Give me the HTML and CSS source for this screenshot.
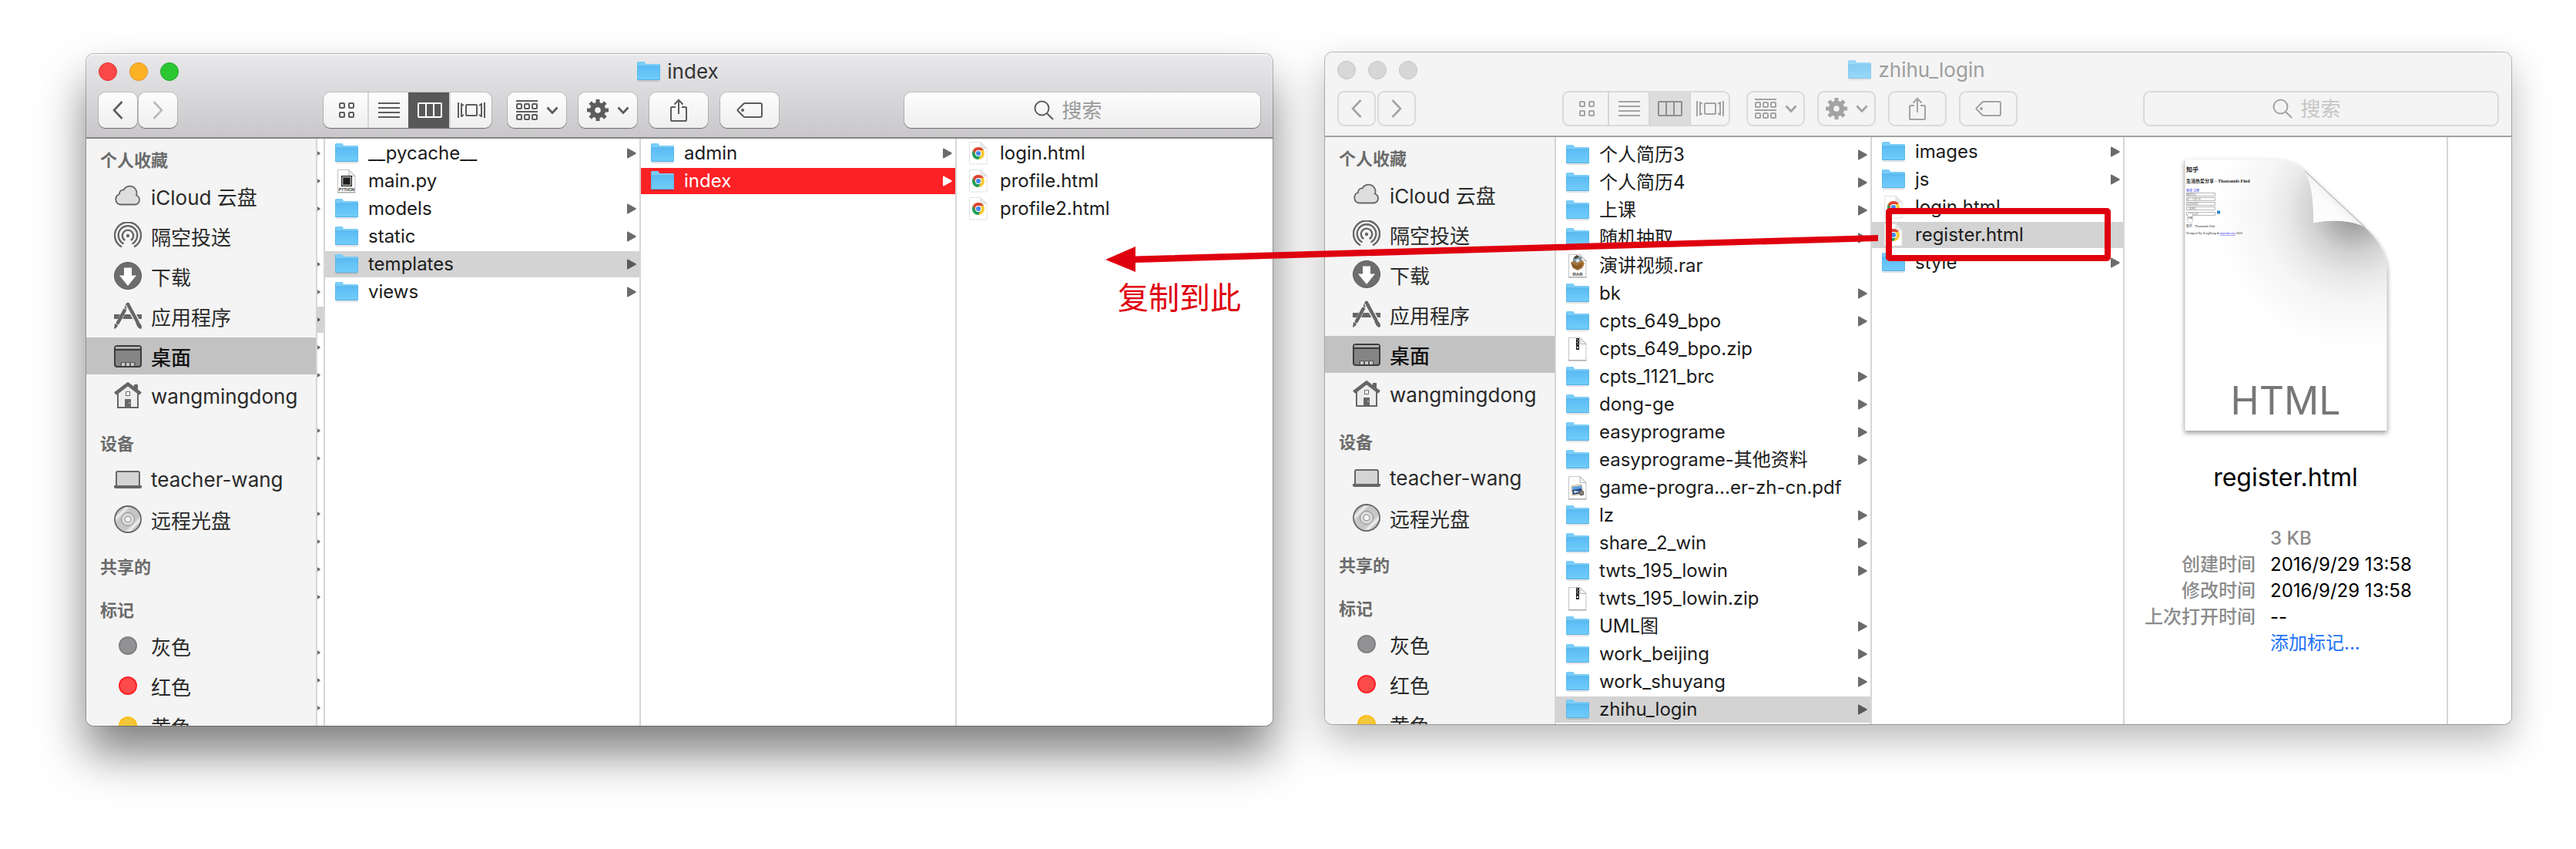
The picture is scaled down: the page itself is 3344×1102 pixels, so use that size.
FILE: index.html
```html
<!DOCTYPE html>
<html lang="zh-CN">
<head>
<meta charset="utf-8">
<title>index</title>
<link rel="stylesheet" href="styles.css">
</head>
<body>
<svg class="sprite" aria-hidden="true">
  <defs>
    <linearGradient id="folder-fill" x1="0" y1="0" x2="0" y2="1"><stop offset="0" stop-color="#5bbcf4"/><stop offset="1" stop-color="#73cdfb"/></linearGradient>
    <linearGradient id="disc-fill" x1="0" y1="0" x2="1" y2="1"><stop offset="0" stop-color="#c4c4c4"/><stop offset=".2" stop-color="#c0c0c0"/><stop offset=".25" stop-color="#f2f2f2"/><stop offset=".34" stop-color="#c6c6c6"/><stop offset=".66" stop-color="#c6c6c6"/><stop offset=".75" stop-color="#f2f2f2"/><stop offset=".8" stop-color="#c0c0c0"/></linearGradient>
    <linearGradient id="curl-fill" x1="0" y1="1" x2="1" y2="0"><stop offset="0" stop-color="#fff"/><stop offset=".4" stop-color="#fbfbfb"/><stop offset="1" stop-color="#c8c8c8"/></linearGradient>
    <radialGradient id="page-shade" gradientUnits="userSpaceOnUse" cx="225" cy="75" r="180"><stop offset="0" stop-color="#989898"/><stop offset=".1" stop-color="#a4a4a4"/><stop offset=".3" stop-color="#d2d2d2"/><stop offset=".48" stop-color="#e9e9e9"/><stop offset=".65" stop-color="#f5f5f5"/><stop offset="1" stop-color="#fff"/></radialGradient>
  </defs>
  <symbol id="folder" viewBox="0 0 30 28">
    <path d="M1 25.500h28v1.500H1z" fill="#000" opacity=".14"/>
    <path d="M0 7V2.500Q0 1 1.500 1h7q1.200 0 1.700 1l.8 2H28.500Q30 4 30 5.500V24q0 1-1 1H1q-1 0-1-1z" fill="#79cdf9"/>
    <path d="M0 7.500h30V24q0 1-1 1H1q-1 0-1-1z" fill="url(#folder-fill)"/>
    <path d="M0 7h30M.500 24.500h29" stroke="#45a3da" stroke-width="1" opacity=".75"/>
    <path d="M.500 2v22M29.500 5v19" stroke="#4fb0e6" stroke-width="1" opacity=".5"/>
  </symbol>
  <symbol id="doc" viewBox="0 0 30 32">
    <path d="M3.500 1.500h14.500l8 8v21h-22.500z" fill="#fff" stroke="#c3c3c3"/>
    <path d="M18 1.500v8h8z" fill="#f1f1f1" stroke="#b4b4b4"/>
    <path d="M3 31h23.500" stroke="#999" stroke-width="1"/>
  </symbol>
  <symbol id="zip" viewBox="0 0 30 32">
    <use href="#doc"/>
    <path d="M13 2h4v15h-4z" fill="#222"/>
    <path d="M14 3h1v1h-1zM15 5h1v1h-1zM14 7h1v1h-1zM15 9h1v1h-1zM14 13h2v2h-2z" fill="#fff"/>
  </symbol>
  <symbol id="pdf" viewBox="0 0 30 32">
    <use href="#doc"/>
    <path d="M7 14l13-2 2 12-14 2z" fill="#e8dcc8" stroke="#b59d74" stroke-width=".8"/>
    <path d="M8 15l12-1.500.5 4-12 2z" fill="#5aa0e0"/><path d="M8 19l12-2 1 6-12 2z" fill="#27488a"/><path d="M10 20l8 1-7 2z" fill="#eee"/>
    <circle cx="20" cy="23" r="3" fill="#8a8078" stroke="#555"/>
  </symbol>
  <symbol id="chrome" viewBox="0 0 30 32">
    <path d="M3.500 1.500h14.500l8 8v20.500h-22.500z" fill="#fff" stroke="#e2e2e2"/>
    <path d="M18 1.500v8h8z" fill="#e9e9e9" stroke="#ddd"/>
    <circle cx="15" cy="16" r="8" fill="#fbc934"/>
    <path d="M8.100 12A8 8 0 0 0 15 24l3.500-6a4 4 0 0 1-7 0z" fill="#1a9f5a"/>
    <path d="M8.100 12A8 8 0 0 1 21.900 12H15a4 4 0 0 0-3.500 6z" fill="#dc4437"/>
    <circle cx="15" cy="16" r="4" fill="#fff"/><circle cx="15" cy="16" r="3" fill="#4285f4"/>
  </symbol>
  <symbol id="arrow" viewBox="0 0 12 14"><path d="M0 1.500Q0 0 1.500.700L11 6q1.500 1 0 2L1.500 13.300Q0 14 0 12.500z" fill="currentColor"/></symbol>

  <symbol id="cloud" viewBox="0 0 36 36"><path d="M8 29.500a7 7 0 0 1-1-13.500a5 5 0 0 1 5.500-5.500a9 9 0 0 1 17 4.500q0 1.500-.5 2.500a6.300 6.300 0 0 1-1 12z" fill="#dedede" stroke="#666" stroke-width="1.800"/></symbol>
  <symbol id="airdrop" viewBox="0 0 36 36">
    <g fill="none" stroke="#666" stroke-width="2.400"><path d="M10 32.500a17 17 0 1 1 16 0" /><path d="M12.500 28.500a12.300 12.300 0 1 1 11 0"/><path d="M14.300 24a7.200 7.200 0 1 1 7.400 0"/></g><circle cx="18" cy="18" r="2.200" fill="#666"/>
  </symbol>
  <symbol id="download" viewBox="0 0 36 36"><circle cx="18" cy="18" r="17.500" fill="#6d6d6d" stroke="#5c5c5c"/><path d="M13 7.500h10v10h6L18 31 7 17.500h6z" fill="#fff"/></symbol>
  <symbol id="apps" viewBox="0 0 36 36">
    <path d="M0 16h8l-3 6H0zM14 16h8l3 6H11zM29 16h7v6h-4z" fill="#666"/>
    <path d="M18 3L5 27" stroke="#666" stroke-width="4.500" stroke-linecap="round" stroke-dasharray="4 5 30"/>
    <path d="M18 3l13 24" stroke="#f4f4f4" stroke-width="7"/>
    <path d="M18 3l12 22" stroke="#666" stroke-width="4.500" stroke-linecap="round"/>
    <path d="M28 27l4-2 4 6q0 3-1 4-4-1-5-4zM1 28l4 2q-1 4-5 5z" fill="#666"/>
  </symbol>
  <symbol id="desktop" viewBox="0 0 36 36"><rect x="1" y="5" width="34" height="27" rx="3" fill="#858585" stroke="#3c3c3c" stroke-width="2"/><path d="M2 6h32v2.500H2z" fill="#b5b5b5"/><path d="M1 10h34" stroke="#3c3c3c" stroke-width="1.800"/><path d="M8.500 26h19v5h-19z" fill="#5a5a5a"/><path d="M10 27h4v4h-4zM16 27h4v4h-4zM22 27h4v4h-4z" fill="#c8c8c8"/></symbol>
  <symbol id="home" viewBox="0 0 36 36"><path d="M5 14L18 4l13 10v19H5z" fill="#ececec" stroke="#666" stroke-width="2"/><path d="M26 3h5v9l-5-4z" fill="#666"/><path d="M1.500 15L18 2.500 34.500 15" fill="none" stroke="#666" stroke-width="4.500"/><path d="M14 22h8v11h-8z" fill="#666"/><path d="M15.500 12.500h5v5h-5z" fill="#fff" stroke="#666"/><path d="M20 26v2" stroke="#ddd"/></symbol>
  <symbol id="laptop" viewBox="0 0 36 36"><rect x="3" y="8" width="30" height="19" rx="2" fill="#d4d4d4" stroke="#666" stroke-width="2"/><path d="M0 26h36v2q0 2-2 2H2q-2 0-2-2z" fill="#666"/></symbol>
  <symbol id="disc" viewBox="0 0 36 36"><circle cx="18" cy="18" r="17" fill="url(#disc-fill)" stroke="#666" stroke-width="1.800"/><circle cx="18" cy="18" r="8.500" fill="#dcdcdc" stroke="#888"/><circle cx="18" cy="18" r="4" fill="#f4f4f4" stroke="#888"/></symbol>

  <symbol id="back" viewBox="0 0 14 26"><path d="M12.500 2L2 13l10.500 11" fill="none" stroke="currentColor" stroke-width="2.600"/></symbol>
  <symbol id="forward" viewBox="0 0 14 26"><path d="M1.500 2L12 13 1.500 24" fill="none" stroke="currentColor" stroke-width="2.600"/></symbol>
  <symbol id="grid" viewBox="0 0 20 20"><g fill="none" stroke="currentColor" stroke-width="2"><rect x="1" y="1" width="6" height="6" rx="1"/><rect x="13" y="1" width="6" height="6" rx="1"/><rect x="1" y="13" width="6" height="6" rx="1"/><rect x="13" y="13" width="6" height="6" rx="1"/></g></symbol>
  <symbol id="list" viewBox="0 0 28 20"><path d="M0 1h28M0 7h28M0 13h28M0 19h28" stroke="currentColor" stroke-width="2"/></symbol>
  <symbol id="columns" viewBox="0 0 32 20"><path d="M2 1h28q1 0 1 1v16q0 1-1 1H2q-1 0-1-1V2q0-1 1-1zM11 1v18M21 1v18" fill="none" stroke="currentColor" stroke-width="2"/></symbol>
  <symbol id="flow" viewBox="0 0 36 20"><g fill="none" stroke="currentColor" stroke-width="2"><path d="M1 0v20M35 0v20M5 1v18M31 1v18M5 2l3 2M5 18l3-2M31 2l-3 2M31 18l-3-2"/><rect x="11" y="3" width="14" height="14" rx="1"/></g></symbol>
  <symbol id="group" viewBox="0 0 28 26"><g fill="none" stroke="currentColor" stroke-width="2"><path d="M0 1h28M0 15h28"/><rect x="1" y="5" width="6" height="6" rx="1"/><rect x="11" y="5" width="6" height="6" rx="1"/><rect x="21" y="5" width="6" height="6" rx="1"/><rect x="1" y="19" width="6" height="6" rx="1"/><rect x="11" y="19" width="6" height="6" rx="1"/><rect x="21" y="19" width="6" height="6" rx="1"/></g></symbol>
  <symbol id="gear" viewBox="0 0 28 28"><g stroke="currentColor" stroke-width="5"><path d="M14 0v7M14 21v7M0 14h7M21 14h7M4.100 4.100l5 5M18.900 18.900l5 5M23.900 4.100l-5 5M9.100 18.900l-5 5"/></g><circle cx="14" cy="14" r="7" fill="none" stroke="currentColor" stroke-width="6.500"/></symbol>
  <symbol id="chevron" viewBox="0 0 16 10"><path d="M1.500 1.500L8 8.500l6.500-7" fill="none" stroke="currentColor" stroke-width="2.800"/></symbol>
  <symbol id="share" viewBox="0 0 24 30"><path d="M8 11H3q-1 0-1 1v16q0 1 1 1h18q1 0 1-1V12q0-1-1-1h-5M12 20V2M6.500 7.500L12 1.800l5.500 5.700" fill="none" stroke="currentColor" stroke-width="2"/></symbol>
  <symbol id="tag" viewBox="0 0 34 20"><path d="M11 1h20q2 0 2 2v14q0 2-2 2H11q-1 0-2-1l-7-7q-1-1 0-2l7-7q1-1 2-1z" fill="none" stroke="currentColor" stroke-width="2"/><circle cx="8" cy="10" r="2" fill="currentColor"/></symbol>
  <symbol id="search" viewBox="0 0 26 26"><circle cx="10.500" cy="10.500" r="9" fill="none" stroke="currentColor" stroke-width="2"/><path d="M17 17l8 8" stroke="currentColor" stroke-width="2.200"/></symbol>
</svg>

<main class="desktop">
  <section class="window window--active">
    <header class="titlebar">
      <div class="titlebar__top">
        <div class="lights"><button class="light light--close" aria-label="关闭"></button><button class="light light--min" aria-label="最小化"></button><button class="light light--zoom" aria-label="缩放"></button></div>
        <h1 class="title"><svg class="file-icon"><use href="#folder"/></svg>index</h1>
      </div>
      <div class="toolbar">
        <div class="nav"><button class="tool tool--nav" aria-label="后退"><svg width="14" height="26"><use href="#back"/></svg></button><button class="tool tool--nav" aria-label="前进" disabled><svg width="14" height="26"><use href="#forward"/></svg></button></div>
        <div class="views">
          <button class="view" aria-label="图标"><svg width="20" height="20"><use href="#grid"/></svg></button><button class="view" aria-label="列表"><svg width="28" height="20"><use href="#list"/></svg></button><button class="view view--on" aria-label="分栏"><svg width="32" height="20"><use href="#columns"/></svg></button><button class="view" aria-label="封面流"><svg width="36" height="20"><use href="#flow"/></svg></button>
        </div>
        <button class="tool" aria-label="排列"><svg width="28" height="26"><use href="#group"/></svg><svg width="16" height="10"><use href="#chevron"/></svg></button>
        <button class="tool" aria-label="操作"><svg width="28" height="28"><use href="#gear"/></svg><svg width="16" height="10"><use href="#chevron"/></svg></button>
        <button class="tool" aria-label="共享"><svg width="24" height="30"><use href="#share"/></svg></button>
        <button class="tool" aria-label="标记"><svg width="34" height="20"><use href="#tag"/></svg></button>
        <label class="search"><svg width="26" height="26"><use href="#search"/></svg><input type="search" placeholder="搜索" aria-label="搜索"></label>
      </div>
    </header>
    <div class="body">
      <nav class="sidebar">
        <h2>个人收藏</h2>
        <a href="#"><svg><use href="#cloud"/></svg>iCloud 云盘</a>
        <a href="#"><svg><use href="#airdrop"/></svg>隔空投送</a>
        <a href="#"><svg><use href="#download"/></svg>下载</a>
        <a href="#"><svg><use href="#apps"/></svg>应用程序</a>
        <a href="#" class="current"><svg><use href="#desktop"/></svg>桌面</a>
        <a href="#"><svg><use href="#home"/></svg>wangmingdong</a>
        <h2>设备</h2>
        <a href="#"><svg><use href="#laptop"/></svg>teacher-wang</a>
        <a href="#"><svg><use href="#disc"/></svg>远程光盘</a>
        <h2>共享的</h2>
        <h2>标记</h2>
        <a href="#"><span class="dot dot--gray"></span>灰色</a>
        <a href="#"><span class="dot dot--red"></span>红色</a>
        <a href="#"><span class="dot dot--yellow"></span>黄色</a>
      </nav>
      <ul class="column column--sliver" aria-hidden="true">
        <li><svg class="arrow"><use href="#arrow"/></svg></li><li><svg class="arrow"><use href="#arrow"/></svg></li><li><svg class="arrow"><use href="#arrow"/></svg></li><li></li><li><svg class="arrow"><use href="#arrow"/></svg></li><li><svg class="arrow"><use href="#arrow"/></svg></li><li class="selected"><svg class="arrow"><use href="#arrow"/></svg></li><li><svg class="arrow"><use href="#arrow"/></svg></li><li><svg class="arrow"><use href="#arrow"/></svg></li><li></li><li><svg class="arrow"><use href="#arrow"/></svg></li><li><svg class="arrow"><use href="#arrow"/></svg></li><li></li><li><svg class="arrow"><use href="#arrow"/></svg></li><li><svg class="arrow"><use href="#arrow"/></svg></li><li><svg class="arrow"><use href="#arrow"/></svg></li><li><svg class="arrow"><use href="#arrow"/></svg></li><li></li><li><svg class="arrow"><use href="#arrow"/></svg></li><li><svg class="arrow"><use href="#arrow"/></svg></li><li><svg class="arrow"><use href="#arrow"/></svg></li>
      </ul>
      <ul class="column">
        <li><svg class="file-icon"><use href="#folder"/></svg><span>__pycache__</span><svg class="arrow"><use href="#arrow"/></svg></li>
        <li><svg class="file-icon file-icon--doc" viewBox="0 0 30 32">
          <use href="#doc"/>
          <path d="M8 9h14v14H8z" fill="#1d1d1d"/><path d="M9.500 10.500h11v11h-11z" fill="#555" stroke="#bbb" stroke-width="1"/><path d="M11 12h8v8h-8z" fill="#1f1f1f"/>
          <text x="15" y="29" text-anchor="middle" class="badge-text badge-text--tiny">PYTHON</text>
        </svg><span>main.py</span></li>
        <li><svg class="file-icon"><use href="#folder"/></svg><span>models</span><svg class="arrow"><use href="#arrow"/></svg></li>
        <li><svg class="file-icon"><use href="#folder"/></svg><span>static</span><svg class="arrow"><use href="#arrow"/></svg></li>
        <li class="selected"><svg class="file-icon"><use href="#folder"/></svg><span>templates</span><svg class="arrow"><use href="#arrow"/></svg></li>
        <li><svg class="file-icon"><use href="#folder"/></svg><span>views</span><svg class="arrow"><use href="#arrow"/></svg></li>
      </ul>
      <ul class="column">
        <li><svg class="file-icon"><use href="#folder"/></svg><span>admin</span><svg class="arrow"><use href="#arrow"/></svg></li>
        <li class="selected selected--focus"><svg class="file-icon"><use href="#folder"/></svg><span>index</span><svg class="arrow"><use href="#arrow"/></svg></li>
      </ul>
      <ul class="column column--last">
        <li><svg class="file-icon file-icon--doc"><use href="#chrome"/></svg><span>login.html</span></li>
        <li><svg class="file-icon file-icon--doc"><use href="#chrome"/></svg><span>profile.html</span></li>
        <li><svg class="file-icon file-icon--doc"><use href="#chrome"/></svg><span>profile2.html</span></li>
      </ul>
    </div>
  </section>

  <section class="window window--inactive">
    <header class="titlebar">
      <div class="titlebar__top">
        <div class="lights"><button class="light" aria-label="关闭"></button><button class="light" aria-label="最小化"></button><button class="light" aria-label="缩放"></button></div>
        <h1 class="title"><svg class="file-icon"><use href="#folder"/></svg>zhihu_login</h1>
      </div>
      <div class="toolbar">
        <div class="nav"><button class="tool tool--nav" aria-label="后退"><svg width="14" height="26"><use href="#back"/></svg></button><button class="tool tool--nav" aria-label="前进"><svg width="14" height="26"><use href="#forward"/></svg></button></div>
        <div class="views">
          <button class="view" aria-label="图标"><svg width="20" height="20"><use href="#grid"/></svg></button><button class="view" aria-label="列表"><svg width="28" height="20"><use href="#list"/></svg></button><button class="view view--on" aria-label="分栏"><svg width="32" height="20"><use href="#columns"/></svg></button><button class="view" aria-label="封面流"><svg width="36" height="20"><use href="#flow"/></svg></button>
        </div>
        <button class="tool" aria-label="排列"><svg width="28" height="26"><use href="#group"/></svg><svg width="16" height="10"><use href="#chevron"/></svg></button>
        <button class="tool" aria-label="操作"><svg width="28" height="28"><use href="#gear"/></svg><svg width="16" height="10"><use href="#chevron"/></svg></button>
        <button class="tool" aria-label="共享"><svg width="24" height="30"><use href="#share"/></svg></button>
        <button class="tool" aria-label="标记"><svg width="34" height="20"><use href="#tag"/></svg></button>
        <label class="search"><svg width="26" height="26"><use href="#search"/></svg><input type="search" placeholder="搜索" aria-label="搜索"></label>
      </div>
    </header>
    <div class="body">
      <nav class="sidebar">
        <h2>个人收藏</h2>
        <a href="#"><svg><use href="#cloud"/></svg>iCloud 云盘</a>
        <a href="#"><svg><use href="#airdrop"/></svg>隔空投送</a>
        <a href="#"><svg><use href="#download"/></svg>下载</a>
        <a href="#"><svg><use href="#apps"/></svg>应用程序</a>
        <a href="#" class="current"><svg><use href="#desktop"/></svg>桌面</a>
        <a href="#"><svg><use href="#home"/></svg>wangmingdong</a>
        <h2>设备</h2>
        <a href="#"><svg><use href="#laptop"/></svg>teacher-wang</a>
        <a href="#"><svg><use href="#disc"/></svg>远程光盘</a>
        <h2>共享的</h2>
        <h2>标记</h2>
        <a href="#"><span class="dot dot--gray"></span>灰色</a>
        <a href="#"><span class="dot dot--red"></span>红色</a>
        <a href="#"><span class="dot dot--yellow"></span>黄色</a>
      </nav>
      <ul class="column column--scrolled">
        <li><svg class="file-icon"><use href="#folder"/></svg><span>个人简历3</span><svg class="arrow"><use href="#arrow"/></svg></li>
        <li><svg class="file-icon"><use href="#folder"/></svg><span>个人简历4</span><svg class="arrow"><use href="#arrow"/></svg></li>
        <li><svg class="file-icon"><use href="#folder"/></svg><span>上课</span><svg class="arrow"><use href="#arrow"/></svg></li>
        <li><svg class="file-icon"><use href="#folder"/></svg><span>随机抽取</span><svg class="arrow"><use href="#arrow"/></svg></li>
        <li><svg class="file-icon file-icon--doc" viewBox="0 0 30 32">
          <use href="#doc"/>
          <path d="M6 12l4-3 5 2 5-3 4 5-3 6-6 3-6-3z" fill="#a8733a"/>
          <path d="M9 6l5-3 7 2-2 5-5 2-5-2z" fill="#7d8f96"/><path d="M10 5l4-3 3 2-5 3z" fill="#4c4034"/>
          <path d="M12 8l4-1 2 3-4 2z" fill="#cfe6f2"/><path d="M7 13l7 3 7-4-1 5-6 4-6-4z" fill="#8a5a28"/>
          <text x="15" y="29" text-anchor="middle" class="badge-text">RAR</text>
        </svg><span>演讲视频.rar</span></li>
        <li><svg class="file-icon"><use href="#folder"/></svg><span>bk</span><svg class="arrow"><use href="#arrow"/></svg></li>
        <li><svg class="file-icon"><use href="#folder"/></svg><span>cpts_649_bpo</span><svg class="arrow"><use href="#arrow"/></svg></li>
        <li><svg class="file-icon file-icon--doc"><use href="#zip"/></svg><span>cpts_649_bpo.zip</span></li>
        <li><svg class="file-icon"><use href="#folder"/></svg><span>cpts_1121_brc</span><svg class="arrow"><use href="#arrow"/></svg></li>
        <li><svg class="file-icon"><use href="#folder"/></svg><span>dong-ge</span><svg class="arrow"><use href="#arrow"/></svg></li>
        <li><svg class="file-icon"><use href="#folder"/></svg><span>easyprograme</span><svg class="arrow"><use href="#arrow"/></svg></li>
        <li><svg class="file-icon"><use href="#folder"/></svg><span>easyprograme-其他资料</span><svg class="arrow"><use href="#arrow"/></svg></li>
        <li><svg class="file-icon file-icon--doc"><use href="#pdf"/></svg><span>game-progra...er-zh-cn.pdf</span></li>
        <li><svg class="file-icon"><use href="#folder"/></svg><span>lz</span><svg class="arrow"><use href="#arrow"/></svg></li>
        <li><svg class="file-icon"><use href="#folder"/></svg><span>share_2_win</span><svg class="arrow"><use href="#arrow"/></svg></li>
        <li><svg class="file-icon"><use href="#folder"/></svg><span>twts_195_lowin</span><svg class="arrow"><use href="#arrow"/></svg></li>
        <li><svg class="file-icon file-icon--doc"><use href="#zip"/></svg><span>twts_195_lowin.zip</span></li>
        <li><svg class="file-icon"><use href="#folder"/></svg><span>UML图</span><svg class="arrow"><use href="#arrow"/></svg></li>
        <li><svg class="file-icon"><use href="#folder"/></svg><span>work_beijing</span><svg class="arrow"><use href="#arrow"/></svg></li>
        <li><svg class="file-icon"><use href="#folder"/></svg><span>work_shuyang</span><svg class="arrow"><use href="#arrow"/></svg></li>
        <li class="selected"><svg class="file-icon"><use href="#folder"/></svg><span>zhihu_login</span><svg class="arrow"><use href="#arrow"/></svg></li>
      </ul>
      <ul class="column column--narrow">
        <li><svg class="file-icon"><use href="#folder"/></svg><span>images</span><svg class="arrow"><use href="#arrow"/></svg></li>
        <li><svg class="file-icon"><use href="#folder"/></svg><span>js</span><svg class="arrow"><use href="#arrow"/></svg></li>
        <li><svg class="file-icon file-icon--doc"><use href="#chrome"/></svg><span>login.html</span></li>
        <li class="selected"><svg class="file-icon file-icon--doc"><use href="#chrome"/></svg><span>register.html</span></li>
        <li><svg class="file-icon"><use href="#folder"/></svg><span>style</span><svg class="arrow"><use href="#arrow"/></svg></li>
      </ul>
      <article class="preview">
        <svg class="page" width="274" height="370" viewBox="0 0 274 370" role="img" aria-label="register.html">
          <path class="page__sheet" d="M6 7H123Q148 7 162 22L240 95Q269 122 269 153V359H6z"/>
          <path d="M6 7H123Q148 7 162 22Q174 42 173 89Q216 82 240 95Q269 122 269 153V359H6z" fill="url(#page-shade)"/>
          <path d="M162 22Q174 42 173 89Q216 82 240 95z" fill="url(#curl-fill)"/>
          <path d="M162 22L240 95" stroke="#c4c4c4" stroke-width="1.500"/>
          <path d="M6 8V359M269 153V359" stroke="#cfcfcf" stroke-width="1"/>
          <g class="mini">
            <text x="8" y="23" class="mini__h1">知乎</text>
            <text x="8" y="37" class="mini__h2">生活热爱分享 - Thousands Find</text>
            <text x="8" y="49" class="mini__link">登录 注册</text>
            <g fill="#fff" stroke="#999" stroke-width=".7"><path d="M8.500 50.500h37v4h-37zM8.500 56.500h37v4h-37zM8.500 62.500h37v4h-37zM8.500 68.500h37v4h-37zM8.500 75.500h37v4h-37z"/></g>
            <g class="mini__hint"><text x="9" y="54">邮箱地址</text><text x="9" y="60">起一个用户名</text><text x="9" y="66">创建新密码</text><text x="9" y="72">重复密码</text><text x="15" y="79">验证码</text></g>
            <path d="M48 73.500h4v4h-4z" fill="#2a86c8"/>
            <rect x="9.500" y="76.500" width="7" height="13" rx="3.500" fill="#fff" stroke="#aaa" stroke-width=".6"/><text x="10" y="84" class="mini__btn">注册</text>
            <text x="8" y="95">知乎 - Thousands Find</text>
            <text x="8" y="104">Designed By ZengRong &amp; <tspan class="mini__link">mycodes.net</tspan> 2016</text>
          </g>
          <text x="137" y="338" text-anchor="middle" class="page__type">HTML</text>
        </svg>
        <h2>register.html</h2>
        <dl>
          <dt></dt><dd class="muted">3 KB</dd>
          <dt>创建时间</dt><dd>2016/9/29 13:58</dd>
          <dt>修改时间</dt><dd>2016/9/29 13:58</dd>
          <dt>上次打开时间</dt><dd>--</dd>
          <dt></dt><dd><a href="#">添加标记...</a></dd>
        </dl>
      </article>
      <div class="column column--last"></div>
    </div>
  </section>

  <svg class="marks" aria-hidden="true"><g fill="#df000f"><path d="M1435 337l39-17v12.500L2438 305v8L1474 341v12z"/></g><rect x="2452" y="274" width="284" height="61" rx="1" fill="none" stroke="#df000f" stroke-width="8" stroke-linejoin="round"/></svg>
  <p class="note">复制到此</p>
</main>
</body>
</html>
```

FILE: styles.css
```css
* { box-sizing: border-box; }

body {
  margin: 0;
  background: #fff;
  color: #1c1c1c;
  font-family: Inter, "Noto Sans CJK SC", sans-serif;
  font-size: 24px;
}

h1, h2, p, ul, dl, dd { margin: 0; padding: 0; font-weight: 400; }
ul { list-style: none; }
button, input { font: inherit; color: inherit; padding: 0; border: 0; background: none; }
svg { display: block; flex: none; }
.sprite { position: absolute; width: 0; height: 0; }
.badge-text { font: 700 6px "Liberation Sans", sans-serif; fill: #333; }
.badge-text--tiny { font-size: 5px; }

.desktop {
  position: relative;
  display: flex;
  gap: 68px;
  height: 100vh;
  padding: 68px 84px 160px 112px;
  overflow: hidden;
}

/* windows */
.window {
  flex: 1 1 0;
  min-width: 0;
  display: flex;
  flex-direction: column;
  border-radius: 10px;
}
.window--active {
  margin-top: 2px;
  box-shadow: 0 0 0 1px rgba(0, 0, 0, .25), 0 36px 60px rgba(0, 0, 0, .5);
}
.window--inactive {
  margin-bottom: 2px;
  box-shadow: 0 0 0 1px rgba(0, 0, 0, .25), 0 20px 50px rgba(0, 0, 0, .28);
}

.titlebar {
  height: 110px;
  flex: none;
  border-bottom: 2px solid #858386;
  border-radius: 10px 10px 0 0;
  background: linear-gradient(#e9e8ea, #c9c7c9);
  box-shadow: inset 0 2px #f4f4f4;
  color: #5c5c5c;
}
.window--inactive .titlebar {
  background: #f4f4f4;
  border-color: #a3a3a3;
  color: #a3a3a3;
}
.titlebar__top {
  display: grid;
  grid-template-columns: 1fr auto 1fr;
  align-items: center;
  height: 50px;
  padding: 0 20px 4px 16px;
}
.lights { display: flex; gap: 16px; }
.light {
  width: 24px;
  height: 24px;
  border-radius: 50%;
  border: 1px solid #c4c4c4;
  background: #d7d7d7;
}
.light--close { background: #fc4848; border-color: #df3033; }
.light--min { background: #fdb225; border-color: #dd9526; }
.light--zoom { background: #2bc732; border-color: #1fa426; }
.title {
  display: flex;
  align-items: center;
  gap: 9px;
  font-size: 26px;
  line-height: 30px;
  color: #333;
}
.window--inactive .title { color: #9e9e9e; }
.window--inactive .title svg { opacity: .7; }

.toolbar { display: flex; align-items: center; gap: 16px; padding: 0 16px; height: 46px; }
.nav { display: flex; gap: 2px; margin-right: 174px; }
.tool {
  display: flex;
  align-items: center;
  justify-content: center;
  gap: 11px;
  flex: none;
  width: 76px;
  height: 46px;
  border-radius: 9px;
}
.tool--nav { width: 50px; }
.tool:disabled { color: #b9b9b9; }
.views { display: flex; flex: none; width: 218px; height: 46px; margin-right: 5px; border-radius: 9px; overflow: hidden; }
.view { flex: none; display: flex; align-items: center; justify-content: center; width: 53px; }
.view:first-child { width: 57px; padding-left: 3px; }
.view:last-child { flex: 1; }
.view + .view { border-left: 2px solid #d6d6d6; }
.window--active .view--on { background: #585858; color: #fff; border-color: #585858; }
.window--inactive .view--on { background: #dcdcdc; color: #8f8f8f; }
.search {
  display: flex;
  align-items: center;
  justify-content: center;
  gap: 11px;
  flex: 0 1 462px;
  min-width: 0;
  height: 46px;
  margin-left: auto;
  border-radius: 9px;
  font-size: 26px;
}
.search input { width: 90px; height: 40px; outline: none; }
.search input::placeholder { color: #9a9a9a; opacity: 1; }
.window--inactive .search input::placeholder { color: #c6c6c6; }
.window--active .tool, .window--active .views, .window--active .search {
  background: linear-gradient(#fdfdfd, #efefef);
  box-shadow: 0 0 0 1px rgba(0, 0, 0, .12), 0 1px 1px rgba(0, 0, 0, .4);
}
.window--inactive .tool, .window--inactive .views, .window--inactive .search {
  border: 2px solid #dadada;
}

.body {
  flex: 1;
  min-height: 0;
  display: flex;
  overflow: hidden;
  background: #fff;
  border-radius: 0 0 10px 10px;
}

/* sidebar */
.sidebar {
  flex: none;
  display: flex;
  flex-direction: column;
  gap: 4px;
  width: 300px;
  padding-top: 8px;
  background: #f4f4f4;
  border-right: 2px solid #d6d6d6;
  overflow: hidden;
}
.sidebar h2 {
  flex: none;
  padding-left: 18px;
  margin: 14px 0 -2px;
  font-size: 22px;
  font-weight: 600;
  line-height: 40px;
  color: #6b6b6b;
}
.sidebar h2:first-child { margin-top: 0; }
.sidebar a {
  display: flex;
  flex: none;
  align-items: center;
  gap: 12px;
  height: 48px;
  padding-left: 36px;
  font-size: 26px;
  color: #2a2a2a;
  text-decoration: none;
  white-space: nowrap;
}
.sidebar a svg { width: 36px; height: 36px; }
.sidebar .current { background: #c2c2c2; color: #111; font-weight: 500; }
.dot { width: 24px; height: 24px; margin: 0 6px; border-radius: 50%; border: 2px solid; }
.dot--gray { background: #929295; border-color: #808083; }
.dot--red { background: #fd4a4b; border-color: #fc2328; }
.dot--yellow { background: #f3c73b; border-color: #fbbf13; }

/* browser columns */
.column {
  display: flex;
  flex-direction: column;
  gap: 2px;
  flex: 0 1 410px;
  min-width: 0;
  padding-top: 2px;
  border-right: 2px solid #d6d6d6;
  overflow: hidden;
}
.column li {
  display: flex;
  align-items: center;
  gap: 13px;
  flex: none;
  height: 34px;
  padding: 0 4px 0 13px;
  line-height: 34px;
  white-space: nowrap;
}
.column span { flex: 1; }
.column--scrolled { padding-top: 6px; }
.column--narrow { flex-basis: 328px; }
.column--last { flex: 1 1 0; border-right: 0; }
.column--sliver { flex: 0 0 10px; }
.column--sliver li { justify-content: flex-end; padding-left: 0; }
.file-icon { width: 30px; height: 28px; }
.file-icon--doc { height: 32px; }
.arrow { width: 12px; height: 14px; color: #6b6b6b; }
.selected { background: #d3d3d3; }
.selected .arrow { color: #5a5a5a; }
.selected--focus { background: #fc2125; color: #fff; }
.selected--focus .arrow { color: #fff; }

/* preview pane */
.preview {
  flex: 0 1 420px;
  display: flex;
  flex-direction: column;
  align-items: center;
  padding-top: 22px;
  border-right: 2px solid #d6d6d6;
  color: #000;
}
.preview h2 { margin: 30px 0 42px; font-size: 32px; line-height: 40px; }
.preview dl {
  display: grid;
  grid-template-columns: 170px 1fr;
  column-gap: 19px;
  width: 100%;
  line-height: 34px;
  white-space: nowrap;
}
.preview dt { text-align: right; color: #8b8b8b; font-weight: 500; }
.preview .muted { color: #8b8b8b; font-weight: 500; }
.preview dd a { color: #1f73f7; text-decoration: none; }
.page { overflow: visible; }
.page__sheet { fill: #fff; filter: drop-shadow(0 3px 3px rgba(0, 0, 0, .4)); }
.page__type { font-size: 50px; fill: #777; }
.mini { font: 4px "Liberation Serif", "Noto Sans CJK SC", serif; fill: #222; }
.mini__h1 { font-size: 8px; font-weight: 700; }
.mini__h2 { font-size: 6px; font-weight: 700; }
.mini__link { fill: #22e; text-decoration: underline; }
.mini__hint { font-size: 3px; fill: #888; }
.mini__btn { font-size: 3px; }

/* annotations drawn over the windows */
.marks { position: absolute; inset: 0; width: 100%; height: 100%; pointer-events: none; }
.note {
  position: absolute;
  left: 1451px;
  top: 363px;
  font-size: 40px;
  line-height: 48px;
  color: #df000f;
}
```
